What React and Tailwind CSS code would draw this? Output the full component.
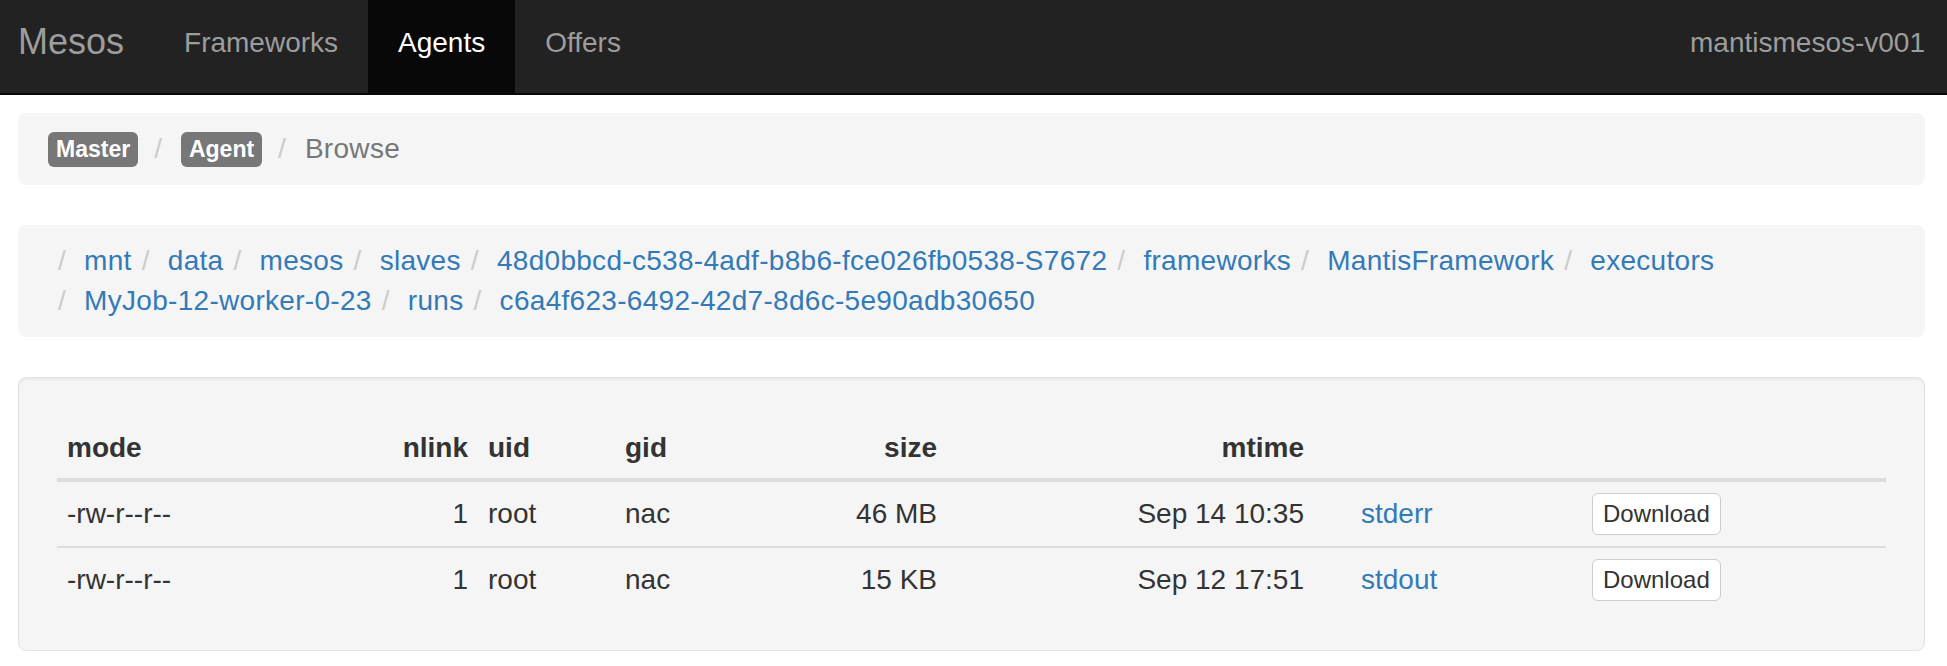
import React from 'react';

const navLinks = [
  { label: 'Frameworks', active: false },
  { label: 'Agents', active: true },
  { label: 'Offers', active: false },
];

const path = [
  'mnt',
  'data',
  'mesos',
  'slaves',
  '48d0bbcd-c538-4adf-b8b6-fce026fb0538-S7672',
  'frameworks',
  'MantisFramework',
  'executors',
  'MyJob-12-worker-0-23',
  'runs',
  'c6a4f623-6492-42d7-8d6c-5e90adb30650',
];

const files = [
  { mode: '-rw-r--r--', nlink: 1, uid: 'root', gid: 'nac', size: '46 MB', mtime: 'Sep 14 10:35', name: 'stderr' },
  { mode: '-rw-r--r--', nlink: 1, uid: 'root', gid: 'nac', size: '15 KB', mtime: 'Sep 12 17:51', name: 'stdout' },
];

const Badge = ({ children }) => (
  <span className="inline-flex items-center h-[35px] px-[8px] rounded-[6px] bg-[#777] text-white text-[23px] font-bold leading-none">
    {children}
  </span>
);

const Sep = () => (
  <span className="text-[#ccc] ml-[16px] mr-[19px]">/</span>
);

const App = () => {
  return (
    <div className="min-h-screen bg-white text-[#333] font-['Liberation_Sans',Arial,sans-serif]">
      {/* navbar */}
      <div className="flex h-[95px] bg-[#222] border-b-2 border-[#080808]">
        <a href="#" className="h-[93px] pl-[18px] pr-[30px] pt-[22px] text-[36px] leading-[40px] text-[#9d9d9d]">
          Mesos
        </a>
        {navLinks.map(link => (
          <a
            key={link.label}
            href="#"
            className={
              link.active
                ? 'h-[93px] px-[30px] pt-[23px] text-[28px] leading-[40px] bg-[#080808] text-white'
                : 'h-[93px] px-[30px] pt-[23px] text-[28px] leading-[40px] text-[#9d9d9d]'
            }
          >
            {link.label}
          </a>
        ))}
        <div className="ml-auto h-[93px] pr-[22px] pt-[23px] text-[28px] leading-[40px] text-[#9d9d9d]">
          mantismesos-v001
        </div>
      </div>

      <div className="ml-[18px] mr-[22px] mt-[18px]">
        {/* top breadcrumb */}
        <div className="flex items-center h-[72px] px-[30px] rounded-[8px] bg-[#f5f5f5] text-[28px] leading-[40px]">
          <Badge>Master</Badge>
          <Sep />
          <Badge>Agent</Badge>
          <Sep />
          <span className="text-[#777] tracking-[0.3px]">Browse</span>
        </div>

        {/* path breadcrumb */}
        <div className="mt-[40px] flex flex-wrap py-[16px] pl-[30px] pr-[30px] rounded-[8px] bg-[#f5f5f5] text-[28px] leading-[40px] tracking-[0.3px]">
          {path.map(part => (
            <span key={part} className="whitespace-nowrap">
              <span className="text-[#ccc] ml-[10px] mr-[18px]">/</span>
              <a href="#" className="text-[#337ab7]">{part}</a>
            </span>
          ))}
        </div>

        {/* files well */}
        <div className="mt-[40px] p-[38px] border border-[#e3e3e3] rounded-[8px] bg-[#f5f5f5] shadow-[inset_0_2px_2px_rgba(0,0,0,0.05)]">
          <table className="w-full table-fixed text-[28px] leading-[40px]">
            <colgroup>
              <col className="w-[292px]" />
              <col className="w-[129px]" />
              <col className="w-[137px]" />
              <col className="w-[164px]" />
              <col className="w-[168px]" />
              <col className="w-[367px]" />
              <col className="w-[268px]" />
              <col />
            </colgroup>
            <thead>
              <tr className="border-b-4 border-[#ddd]">
                <th className="px-[10px] pt-[12px] pb-[10px] text-left font-bold">mode</th>
                <th className="px-[10px] pt-[12px] pb-[10px] text-right font-bold">nlink</th>
                <th className="px-[10px] pt-[12px] pb-[10px] text-left font-bold">uid</th>
                <th className="px-[10px] pt-[12px] pb-[10px] text-left font-bold">gid</th>
                <th className="px-[10px] pt-[12px] pb-[10px] text-right font-bold">size</th>
                <th className="px-[10px] pt-[12px] pb-[10px] text-right font-bold">mtime</th>
                <th className="px-[10px] pt-[12px] pb-[10px]"></th>
                <th className="px-[10px] pt-[12px] pb-[10px]"></th>
              </tr>
            </thead>
            <tbody>
              {files.map(f => (
                <tr key={f.name} className="border-t-2 border-[#ddd]">
                  <td className="px-[10px] py-[11px] align-middle">{f.mode}</td>
                  <td className="px-[10px] py-[11px] align-middle text-right">{f.nlink}</td>
                  <td className="px-[10px] py-[11px] align-middle">{f.uid}</td>
                  <td className="px-[10px] py-[11px] align-middle">{f.gid}</td>
                  <td className="px-[10px] py-[11px] align-middle text-right">{f.size}</td>
                  <td className="px-[10px] py-[11px] align-middle text-right">{f.mtime}</td>
                  <td className="py-[11px] pr-[10px] pl-[47px] align-middle">
                    <a href="#" className="text-[#337ab7]">{f.name}</a>
                  </td>
                  <td className="px-[10px] py-[11px] align-middle">
                    <button className="h-[42px] px-[10px] border border-[#ccc] rounded-[6px] bg-white text-[24px] leading-none text-[#333]">
                      Download
                    </button>
                  </td>
                </tr>
              ))}
            </tbody>
          </table>
        </div>
      </div>
    </div>
  );
};

export default App;
